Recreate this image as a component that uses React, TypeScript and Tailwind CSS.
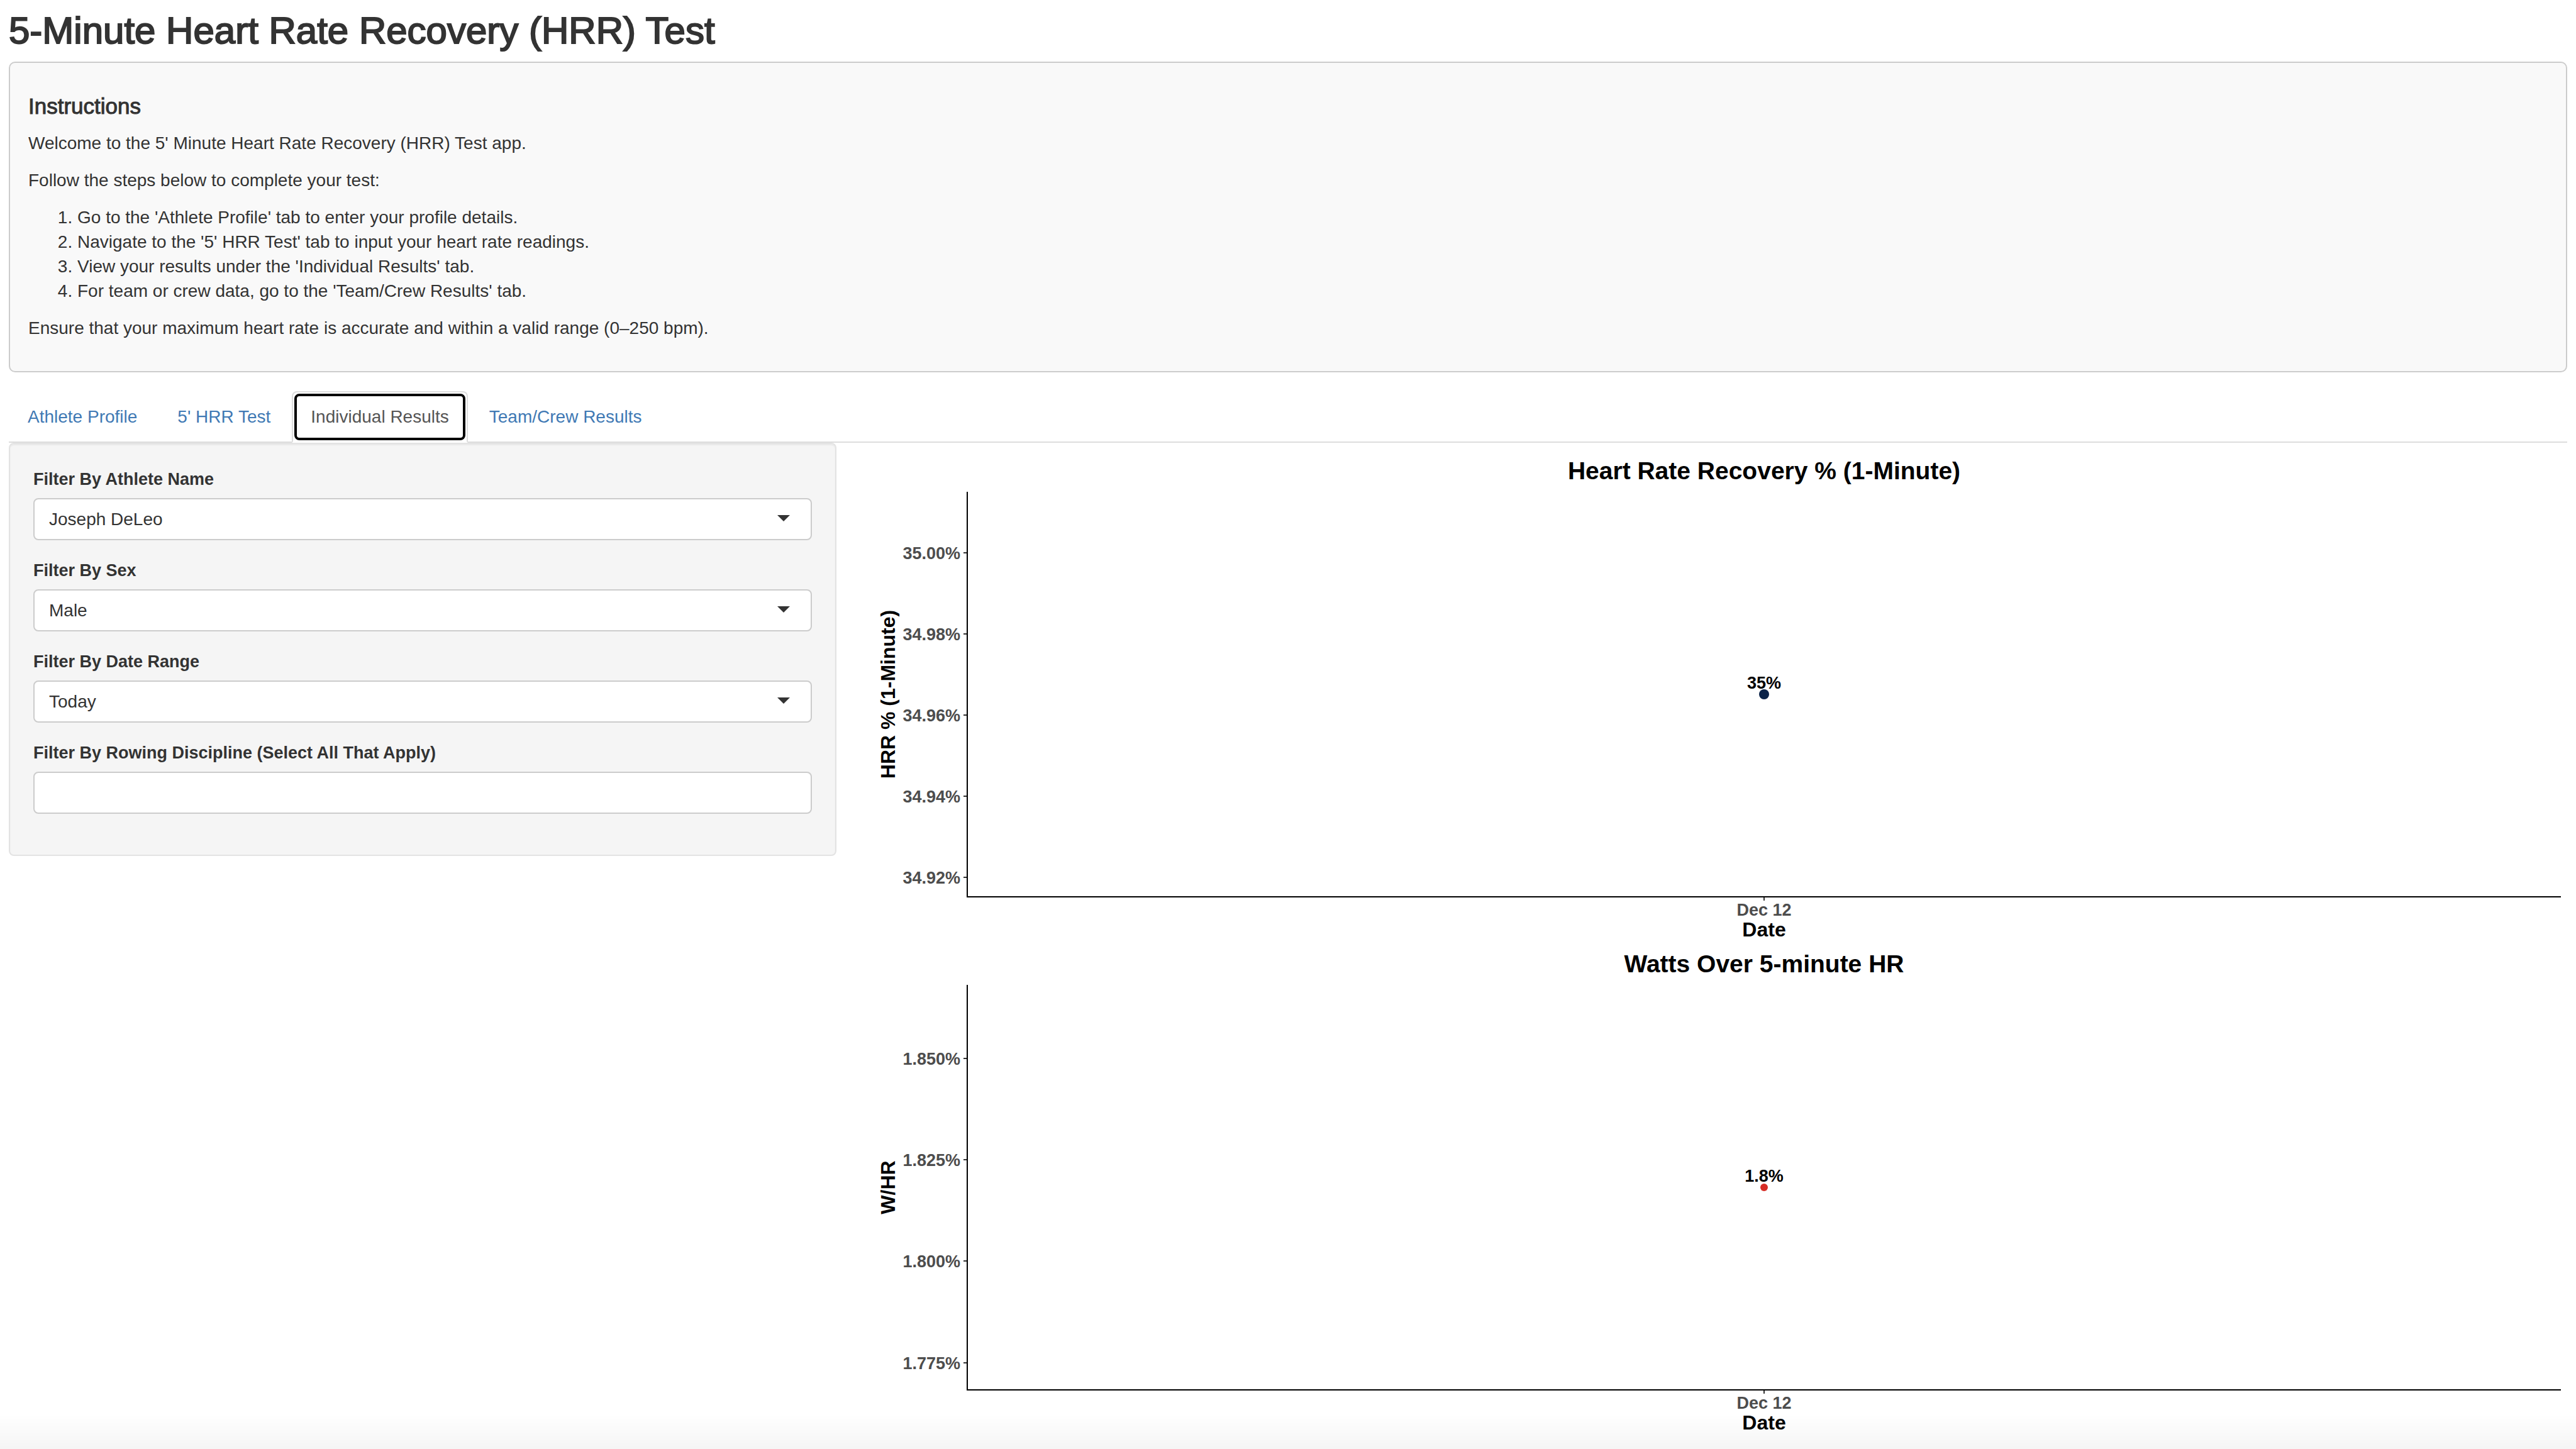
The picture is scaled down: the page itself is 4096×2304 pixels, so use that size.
import React from "react";

const steps = [
  "Go to the 'Athlete Profile' tab to enter your profile details.",
  "Navigate to the '5' HRR Test' tab to input your heart rate readings.",
  "View your results under the 'Individual Results' tab.",
  "For team or crew data, go to the 'Team/Crew Results' tab.",
];

const tabs = ["Athlete Profile", "5' HRR Test", "Individual Results", "Team/Crew Results"];

const filters = [
  { id: "athlete", label: "Filter By Athlete Name", value: "Joseph DeLeo" },
  { id: "sex", label: "Filter By Sex", value: "Male" },
  { id: "range", label: "Filter By Date Range", value: "Today" },
];

type Tick = { y: number; label: string };

type ChartProps = {
  title: string;
  yTitle: string;
  ticks: Tick[];
  pointLabel: string;
  pointColor: string;
  radius: number;
};

const AXIS_TOP = 64;
const AXIS_BOTTOM = 708;
const POINT_Y = 386;

function Chart({ title, yTitle, ticks, pointLabel, pointColor, radius }: ChartProps) {
  return (
    <div className="pl-[148px] pr-[10px]">
      <svg role="img" aria-label={title} className="block h-[784px] w-full overflow-visible font-bold">
        <text x="50%" y={44} textAnchor="middle" className="fill-black text-[39px]">
          {title}
        </text>
        {ticks.map((t) => (
          <g key={t.label}>
            <line x1={-6} x2={0} y1={t.y} y2={t.y} stroke="#333333" strokeWidth={2} />
            <text x={-11} y={t.y + 10} textAnchor="end" className="fill-[#4d4d4d] text-[27px]">
              {t.label}
            </text>
          </g>
        ))}
        <line x1="50%" x2="50%" y1={AXIS_BOTTOM} y2={AXIS_BOTTOM + 6} stroke="#333333" strokeWidth={2} />
        <line x1={0} x2={0} y1={AXIS_TOP} y2={AXIS_BOTTOM + 1} stroke="#000000" strokeWidth={2} />
        <line x1={0} x2="100%" y1={AXIS_BOTTOM} y2={AXIS_BOTTOM} stroke="#000000" strokeWidth={2} />
        <text
          transform={`translate(-115 ${POINT_Y}) rotate(-90)`}
          textAnchor="middle"
          className="fill-black text-[32px]"
        >
          {yTitle}
        </text>
        <circle cx="50%" cy={POINT_Y} r={radius} fill={pointColor} />
        <text x="50%" y={POINT_Y - 9} textAnchor="middle" className="fill-black text-[27px]">
          {pointLabel}
        </text>
        <text x="50%" y={738} textAnchor="middle" className="fill-[#4d4d4d] text-[27px]">
          Dec 12
        </text>
        <text x="50%" y={771} textAnchor="middle" className="fill-black text-[32px]">
          Date
        </text>
      </svg>
    </div>
  );
}

export default function App() {
  return (
    <div className="min-h-screen bg-white px-[14px] pt-4 font-['Liberation_Sans',Arial,sans-serif] text-[28px] leading-[39px] text-[#333333]">
      <h2 className="mb-[17px] text-[60px] font-normal leading-[65px] [-webkit-text-stroke:2px]">
        5-Minute Heart Rate Recovery (HRR) Test
      </h2>

      <section className="rounded-[10px] border-2 border-[#cccccc] bg-[#f9f9f9] p-[29px]">
        <h4 className="my-5 text-[35px] font-normal leading-[39px] [-webkit-text-stroke:1px]">Instructions</h4>
        <p className="mb-5">Welcome to the 5' Minute Heart Rate Recovery (HRR) Test app.</p>
        <p className="mb-5">Follow the steps below to complete your test:</p>
        <ol className="mb-5 list-decimal pl-[78px]">
          {steps.map((s) => (
            <li key={s}>{s}</li>
          ))}
        </ol>
        <p className="mb-5">Ensure that your maximum heart rate is accurate and within a valid range (0–250 bpm).</p>
      </section>

      <ul role="tablist" className="mt-[30px] flex gap-1 border-b-2 border-[#dddddd]">
        {tabs.map((t) => {
          const active = t === "Individual Results";
          return (
            <li
              key={t}
              role="presentation"
              className={
                active
                  ? "-mb-[2px] rounded-t-lg border-2 border-[#dddddd] border-b-white bg-white p-[2px]"
                  : "-mb-[2px] border-2 border-transparent p-[2px]"
              }
            >
              <button
                type="button"
                role="tab"
                aria-selected={active}
                className={
                  active
                    ? "block rounded-lg border-4 border-black px-[22px] pb-[14px] pt-[13px] text-[#555555]"
                    : "block rounded-lg border-4 border-transparent px-[22px] pb-[14px] pt-[13px] text-[#4079b4]"
                }
              >
                {t}
              </button>
            </li>
          );
        })}
      </ul>

      <div className="grid grid-cols-3 items-start gap-[60px]">
        <form className="flex flex-col gap-[29px] rounded-lg border-2 border-[#e3e3e3] bg-[#f5f5f5] px-[37px] pb-[65px] pt-[37px] shadow-[inset_0_2px_2px_rgba(0,0,0,0.05)]">
          {filters.map((f) => (
            <div key={f.id} className="flex flex-col gap-[10px]">
              <label htmlFor={f.id} className="text-[27px] font-bold">
                {f.label}
              </label>
              <div className="relative">
                <select
                  id={f.id}
                  defaultValue={f.value}
                  className="block h-[67px] w-full appearance-none rounded-lg border-2 border-[#cccccc] bg-white px-[23px]"
                >
                  <option>{f.value}</option>
                </select>
                <svg
                  aria-hidden="true"
                  viewBox="0 0 20 10"
                  className="pointer-events-none absolute right-[35px] top-[27px] h-[10px] w-[20px]"
                >
                  <path d="M0 0H20L10 10Z" fill="#333333" />
                </svg>
              </div>
            </div>
          ))}
          <div className="flex flex-col gap-[10px]">
            <label htmlFor="discipline" className="text-[27px] font-bold">
              Filter By Rowing Discipline (Select All That Apply)
            </label>
            <input
              id="discipline"
              type="text"
              className="block h-[67px] w-full rounded-lg border-2 border-[#cccccc] bg-white px-[23px]"
            />
          </div>
        </form>

        <main className="col-span-2 pt-[14px]">
          <Chart
            title="Heart Rate Recovery % (1-Minute)"
            yTitle="HRR % (1-Minute)"
            ticks={[
              { y: 161, label: "35.00%" },
              { y: 290, label: "34.98%" },
              { y: 419, label: "34.96%" },
              { y: 548, label: "34.94%" },
              { y: 677, label: "34.92%" },
            ]}
            pointLabel="35%"
            pointColor="#0a2248"
            radius={8}
          />
          <Chart
            title="Watts Over 5-minute HR"
            yTitle="W/HR"
            ticks={[
              { y: 181, label: "1.850%" },
              { y: 342, label: "1.825%" },
              { y: 503, label: "1.800%" },
              { y: 665, label: "1.775%" },
            ]}
            pointLabel="1.8%"
            pointColor="#d62d26"
            radius={6}
          />
        </main>
      </div>

      <div className="pointer-events-none fixed inset-x-0 bottom-0 h-14 bg-linear-to-b from-transparent to-black/4" />
    </div>
  );
}
